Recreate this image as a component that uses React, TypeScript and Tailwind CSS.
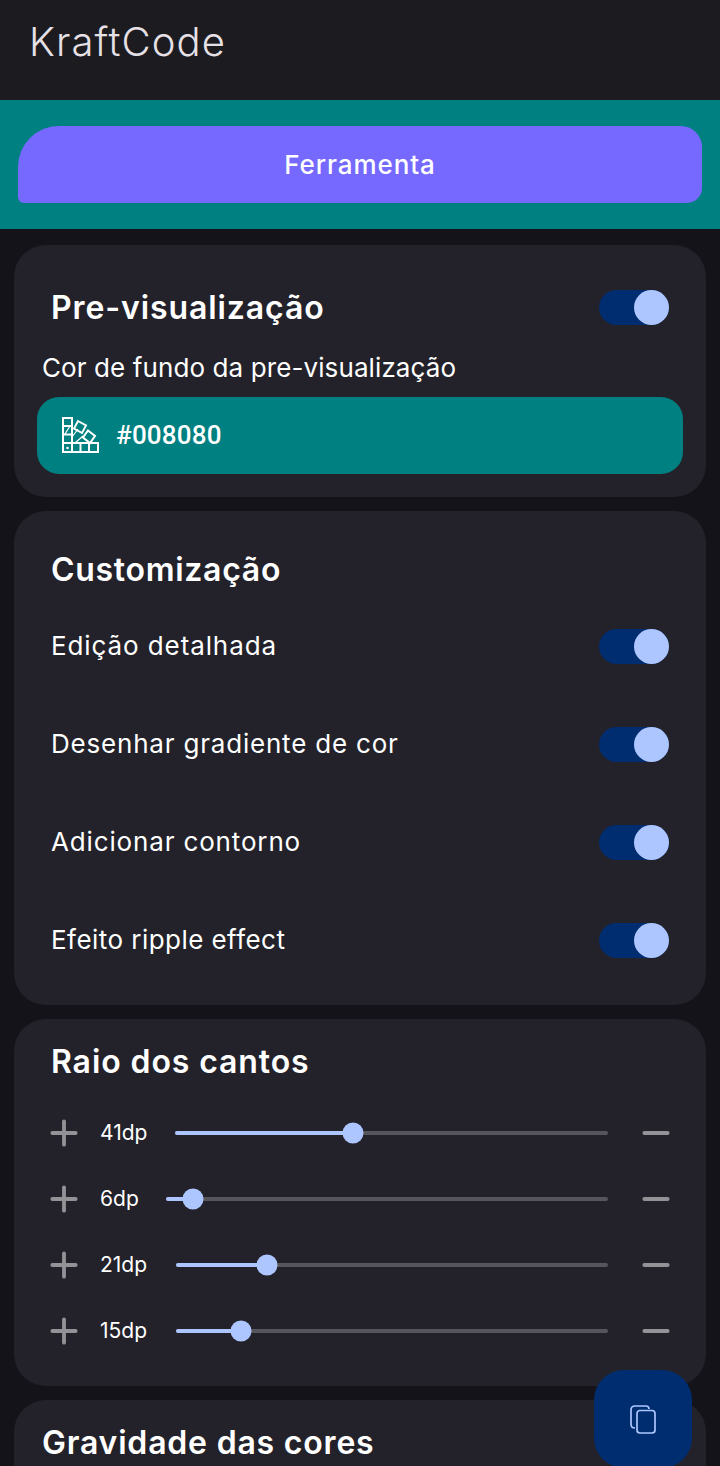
import React from "react";
import { Minus, Plus } from "lucide-react";

const switches = [
  { label: "Edição detalhada", tracking: "tracking-[0.9px]" },
  { label: "Desenhar gradiente de cor", tracking: "tracking-[0.8px]" },
  { label: "Adicionar contorno", tracking: "tracking-[0.85px]" },
  { label: "Efeito ripple effect", tracking: "tracking-[0.45px]" },
];

const corners = [
  { label: "41dp", value: 41, labelWidth: "w-[75px]" },
  { label: "6dp", value: 6, labelWidth: "w-[66px]" },
  { label: "21dp", value: 21, labelWidth: "w-[76px]" },
  { label: "15dp", value: 15, labelWidth: "w-[76px]" },
];

function Toggle() {
  return (
    <div className="relative h-[35px] w-[70px] shrink-0 rounded-full bg-[#002d6f]">
      <div className="absolute right-0 top-0 h-[35px] w-[35px] rounded-full bg-[#adc6ff]" />
    </div>
  );
}

function PaletteIcon() {
  return (
    <svg width="37" height="37" viewBox="0 0 37 37" fill="none" stroke="white" strokeWidth="2" className="shrink-0">
      <path d="M1 1h9v34H1z" />
      <path d="M1 9h9M1 17.5h9M1 26h9" />
      <path d="M10 26h26v9H10" />
      <path d="M18.5 26v9M27 26v9" />
      <path d="M16 4l8 4.5-4 7.500-8-4.500z" />
      <path d="M26 13.5l7 5.500-5 7-7-5.500z" />
      <path d="M10 20l6-8M13 26l8-7M3 17l5-8" strokeWidth="1.2" />
      <circle cx="5.5" cy="31" r="1.300" fill="white" stroke="none" />
    </svg>
  );
}

function CopyIcon() {
  return (
    <svg width="30" height="33" viewBox="0 0 30 33" fill="none" stroke="#adc6ff" strokeWidth="1.7" className="shrink-0">
      <path d="M7 25Q3 25 3 21V7Q3 3 7 3H18Q21 3 21 6" />
      <rect x="9" y="7.500" width="18" height="22.500" rx="3" />
    </svg>
  );
}

function CornerRow({ label, value, labelWidth }: { label: string; value: number; labelWidth: string }) {
  return (
    <div className="flex h-[66px] items-center">
      <Plus className="-mx-[7px] h-[40px] w-[40px] shrink-0 text-[#939297]" strokeWidth={2.3} />
      <span className={`ml-[23px] shrink-0 text-[21px] font-normal text-white ${labelWidth}`}>{label}</span>
      <div className="relative h-[4px] flex-1 rounded-full bg-[#56555b]">
        <div className="h-full rounded-full bg-[#adc6ff]" style={{ width: `${value}%` }} />
        <div
          className="absolute top-1/2 h-[21px] w-[21px] -translate-x-1/2 -translate-y-1/2 rounded-full bg-[#adc6ff]"
          style={{ left: `${value}%` }}
        />
      </div>
      <Minus className="-mr-[7px] ml-[28px] h-[40px] w-[40px] shrink-0 text-[#939297]" strokeWidth={2.3} />
    </div>
  );
}

export default function App() {
  return (
    <div className="relative h-[1466px] w-[720px] overflow-hidden bg-[#14131a] font-['Inter',sans-serif]">
      <header className="flex h-[100px] items-start bg-[#1c1b20] pl-[29px] pt-[17px]">
        <h1 className="text-[40px] font-light leading-[50px] tracking-[1.1px] text-[#e6e1e6]">KraftCode</h1>
      </header>

      <div className="flex h-[129px] items-start bg-[#008080] px-[18px] pt-[26px]">
        <button className="h-[77px] w-full rounded-bl-[6px] rounded-br-[15px] rounded-tl-[41px] rounded-tr-[21px] bg-[#7569ff] text-[26px] font-medium tracking-[0.9px] text-white">
          Ferramenta
        </button>
      </div>

      <main className="flex flex-col gap-[14px] px-[14px] pt-[16px]">
        <section className="h-[252px] rounded-[32px] bg-[#23222a] px-[23px] pt-[45px]">
          <div className="flex items-center justify-between px-[14px]">
            <h2 className="text-[32px] font-semibold leading-[35px] tracking-[0.9px] text-white">Pre-visualização</h2>
            <Toggle />
          </div>
          <p className="mt-[25px] pl-[5px] text-[26px] font-normal leading-[35px] tracking-[0.1px] text-white">Cor de fundo da pre-visualização</p>
          <button className="mt-[12px] flex h-[77px] w-full items-center gap-[17px] rounded-[22px] bg-[#008080] pl-[25px] text-white">
            <PaletteIcon />
            <span className="font-['Roboto',sans-serif] text-[26px] font-medium tracking-[0.2px]">#008080</span>
          </button>
        </section>

        <section className="h-[494px] rounded-[32px] bg-[#23222a] px-[37px] pt-[37px]">
          <h2 className="text-[32px] font-semibold leading-[44px] tracking-[0.7px] text-white">Customização</h2>
          <div className="mt-[5px] flex flex-col">
            {switches.map((item) => (
              <div key={item.label} className="flex h-[98px] items-center justify-between">
                <span className={`pb-[2px] text-[26px] font-normal text-white ${item.tracking}`}>{item.label}</span>
                <Toggle />
              </div>
            ))}
          </div>
        </section>

        <section className="h-[367px] rounded-[32px] bg-[#23222a] px-[37px] pt-[21px]">
          <h2 className="text-[32px] font-semibold leading-[44px] tracking-[0.9px] text-white">Raio dos cantos</h2>
          <div className="mt-[16px] flex flex-col">
            {corners.map((corner) => (
              <CornerRow key={corner.label} {...corner} />
            ))}
          </div>
        </section>

        <section className="h-[200px] rounded-[32px] bg-[#23222a] px-[28px] pt-[21px]">
          <h2 className="text-[32px] font-semibold leading-[44px] tracking-[0.8px] text-white">Gravidade das cores</h2>
        </section>
      </main>

      <button className="absolute left-[594px] top-[1370px] flex h-[98px] w-[98px] items-center justify-center rounded-[30px] bg-[#002d6f]">
        <CopyIcon />
      </button>
    </div>
  );
}
